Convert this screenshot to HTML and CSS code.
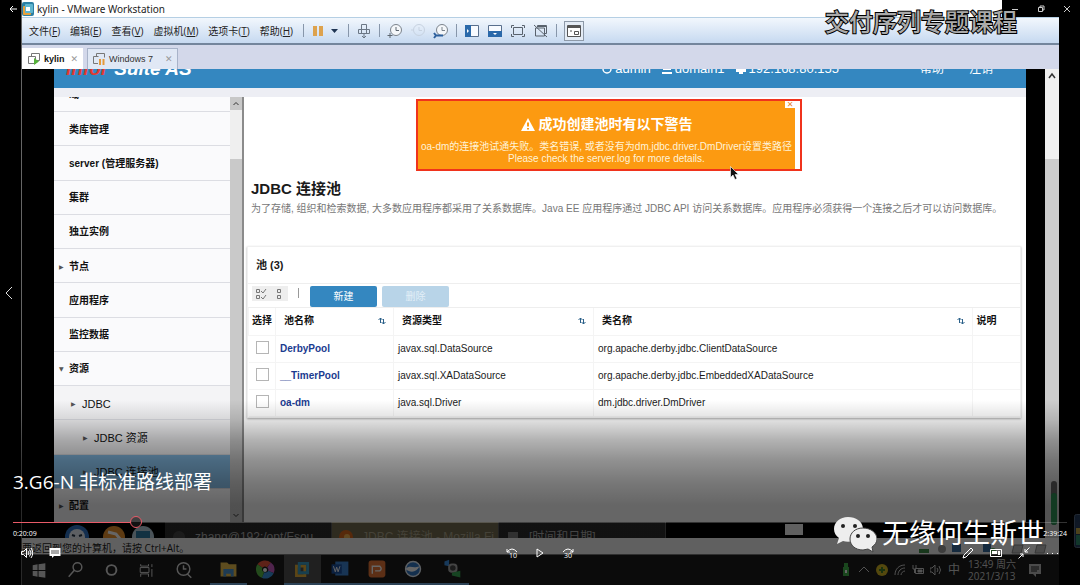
FILE: index.html
```html
<!DOCTYPE html>
<html lang="zh-CN">
<head>
<meta charset="utf-8">
<title>3.G6-N 非标准路线部署</title>
<link rel="stylesheet" href="styles.css">
</head>
<body>
<div class="player">
  <main class="desktop">
    <div class="titlebar">
      <svg class="app-icon" viewBox="0 0 12 14"><rect width="12" height="14" rx="2" fill="#2c7fa3"/><rect x="1" y="4" width="8" height="9" rx="1" fill="#e9a03a"/><rect x="3" y="2" width="8" height="9" rx="1" fill="#5fb5cf"/><rect x="4" y="5" width="4" height="4" fill="#fff"/></svg>
      <span>kylin - VMware Workstation</span>
    </div>
    <div class="menubar">
      <nav class="menus">
        <button>文件(<u>F</u>)</button><button>编辑(<u>E</u>)</button><button>查看(<u>V</u>)</button><button>虚拟机(<u>M</u>)</button><button>选项卡(<u>T</u>)</button><button>帮助(<u>H</u>)</button>
      </nav>
      <div class="tools">
        <i class="sep"></i>
        <button class="wide" aria-label="暂停"><svg width="30" height="16" viewBox="0 0 30 16"><path d="M2 3h4v10H2zM8 3h4v10H8z" fill="#dda24d"/><path d="M20 6h7l-3.500 4z" fill="#1f3554"/></svg></button>
        <i class="sep"></i>
        <button aria-label="发送"><svg width="16" height="16" viewBox="0 0 16 16" fill="none" stroke="#6b7785"><path d="M5.500 6V1.500h5V6M2.500 6.500h11v4h-11zM5.500 6.500v4M10.500 6.500v4M8 10v4M6 13l2 2 2-2"/></svg></button>
        <i class="sep"></i>
        <button aria-label="快照"><svg width="16" height="16" viewBox="0 0 16 16" fill="none" stroke="#7b838c"><circle cx="9" cy="7" r="5.500" fill="#f4f7fa"/><path d="M9 4v3.500h3M3 10v5M0.500 12.500h5" stroke="#5d6670"/></svg></button>
        <button aria-label="恢复快照" disabled><svg width="16" height="16" viewBox="0 0 16 16" fill="none" stroke="#c7d2e0"><circle cx="9" cy="7" r="5.500"/><path d="M9 4v3.500h3M1 7h2"/></svg></button>
        <button aria-label="管理快照"><svg width="16" height="16" viewBox="0 0 16 16" fill="none" stroke="#7b838c"><circle cx="9" cy="7" r="5.500" fill="#f4f7fa"/><path d="M9 4v3.500h3"/><path d="M1 10l2 2.500h7M1 15l2-2.500" stroke="#2c5f9c" stroke-width="2"/></svg></button>
        <i class="sep"></i>
        <button aria-label="显示库"><svg width="16" height="16" viewBox="0 0 16 16"><path d="M1.500 2.500h13v11h-13z" fill="#f8fbff" stroke="#596f8d"/><path d="M1 2h6v12H1z" fill="#2a69aa"/><path d="M3 6l2 2-2 2z" fill="#fff"/></svg></button>
        <button aria-label="缩略图栏"><svg width="16" height="16" viewBox="0 0 16 16"><path d="M1.500 2.500h13v11h-13z" fill="#f8fbff" stroke="#596f8d"/><path d="M1 8h14v6H1z" fill="#2a69aa"/><path d="M6 10h4l-2 2z" fill="#fff"/></svg></button>
        <button aria-label="全屏"><svg width="16" height="16" viewBox="0 0 16 16" fill="none" stroke="#59626d"><path d="M3.500 4.500h9v7h-9zM1.500 5V2.500H4M12 2.500h2.500V5M1.500 11v2.500H4M12 13.500h2.500V11"/></svg></button>
        <button aria-label="Unity"><svg width="16" height="16" viewBox="0 0 16 16" fill="none" stroke="#59626d"><path d="M4.500 4V2.500h9v8H12M2.500 5h9v8h-9zM1 2l13 12M5 3.500h8"/></svg></button>
        <i class="sep"></i>
        <button class="boxed" aria-label="控制台视图"><svg width="16" height="16" viewBox="0 0 16 16" fill="none" stroke="#555"><path d="M1.500 2.500h13v11h-13z" fill="#fff"/><path d="M1.500 4h13" stroke-width="2"/><path d="M8.500 8.500h4v3h-4zM4 8h2"/></svg></button>
      </div>
    </div>
    <div class="tabs">
      <button class="tab active"><svg width="12" height="12" viewBox="0 0 12 12" fill="none" stroke="#777"><path d="M3.500 3V.5h8v7H9M.5 3.500h7v7h-7z"/><path d="M6 5l5 3.500L6 12z" fill="#55b33a" stroke="none"/></svg><b>kylin</b><span class="x">✕</span></button>
      <button class="tab"><svg width="12" height="12" viewBox="0 0 12 12" fill="none" stroke="#777"><path d="M3.500 3V.5h8v4M.5 3.500h5M.5 3.500v7H5"/><path d="M6 6h2v6H6zM9.500 6h2v6h-2z" fill="#e59a3a" stroke="none"/></svg><span>Windows 7</span><span class="x far">✕</span></button>
    </div>
    <div class="guest">
      <div class="screen">
        <header class="banner">
          <div class="logo"><em>infor</em>Suite AS</div>
          <div class="who">
            <span><svg width="10" height="10" viewBox="0 0 10 10" fill="none" stroke="#fff" stroke-width="1.500"><circle cx="5" cy="5" r="4"/></svg>admin</span>
            <span><svg width="10" height="10" viewBox="0 0 10 10" fill="none" stroke="#fff" stroke-width="2"><path d="M1 1h8M1 5h8M0 9h10"/></svg>domain1</span>
            <span><svg width="10" height="10" viewBox="0 0 10 10" fill="#fff"><path d="M3 0h4v5h3v3H7v2H3V8H0V5h3z"/></svg>192.168.80.155</span>
          </div>
          <div class="links"><a href="#">帮助</a><a href="#">注销</a></div>
        </header>
        <div class="page">
          <aside class="side">
            <ul class="tree">
              <li class="cut">域</li>
              <li>类库管理</li>
              <li>server (管理服务器)</li>
              <li>集群</li>
              <li>独立实例</li>
              <li class="closed">节点</li>
              <li>应用程序</li>
              <li>监控数据</li>
              <li class="open">资源</li>
              <li class="closed l2">JDBC</li>
              <li class="closed l3">JDBC 资源</li>
              <li class="closed l3 current">JDBC 连接池</li>
              <li class="closed">配置</li>
            </ul>
            <div class="sidebar-scroll"><svg class="cap" viewBox="0 0 12 13"><path d="M3.500 8L6 5.500 8.500 8" fill="none" stroke="#333"/></svg><span class="thumb"></span><svg class="cap" viewBox="0 0 12 13"><path d="M3.500 5L6 7.500 8.500 5" fill="none" stroke="#333"/></svg></div>
          </aside>
          <section class="content">
            <div class="alert">
              <div class="alert-body">
                <h2><svg width="14" height="13" viewBox="0 0 14 13"><path d="M7 0l7 13H0z" fill="#fff"/><path d="M7 4.500v4M7 10v1.500" stroke="#fc9a11" stroke-width="2"/></svg>成功创建池时有以下警告</h2>
                <p>oa-dm的连接池试通失败。类名错误, 或者没有为dm.jdbc.driver.DmDriver设置类路径</p>
                <p>Please check the server.log for more details.</p>
                <button class="dismiss" aria-label="关闭">✕</button>
              </div>
            </div>
            <h1>JDBC 连接池</h1>
            <p class="desc">为了存储, 组织和检索数据, 大多数应用程序都采用了关系数据库。Java EE 应用程序通过 JDBC API 访问关系数据库。应用程序必须获得一个连接之后才可以访问数据库。</p>
            <div class="panel">
              <h3>池 (3)</h3>
              <div class="actions">
                <span class="picks">
                  <button aria-label="全选"><svg width="12" height="12" viewBox="0 0 12 12" fill="none" stroke="#777"><path d="M1.500 1.500h3v3h-3zM1.500 7.500h3v3h-3zM6 3l2 2 3-4M6 9l2 2 3-4"/></svg></button>
                  <button aria-label="取消全选"><svg width="12" height="12" viewBox="0 0 12 12" fill="none" stroke="#777"><path d="M4.500 1.500h3v3h-3zM4.500 7.500h3v3h-3z"/></svg></button>
                </span>
                <i class="bar"></i>
                <button class="primary">新建</button>
                <button class="primary" disabled>删除</button>
              </div>
              <table>
                <colgroup><col class="c1"><col class="c2"><col class="c3"><col><col class="c5"></colgroup>
                <thead><tr><th class="pick">选择</th>
                  <th><div>池名称<svg width="8" height="8" viewBox="0 0 8 8" fill="none" stroke="#2b6089"><path d="M2.500 6V1M.5 3l2-2 2 2M5.500 2v5M3.500 5l2 2 2-2"/></svg></div></th>
                  <th><div>资源类型<svg width="8" height="8" viewBox="0 0 8 8" fill="none" stroke="#2b6089"><path d="M2.500 6V1M.5 3l2-2 2 2M5.500 2v5M3.500 5l2 2 2-2"/></svg></div></th>
                  <th><div>类名称<svg width="8" height="8" viewBox="0 0 8 8" fill="none" stroke="#2b6089"><path d="M2.500 6V1M.5 3l2-2 2 2M5.500 2v5M3.500 5l2 2 2-2"/></svg></div></th>
                  <th class="last">说明</th></tr></thead>
                <tbody>
                  <tr><td class="pick"><input type="checkbox" aria-label="DerbyPool"></td><td><a href="#">DerbyPool</a></td><td>javax.sql.DataSource</td><td>org.apache.derby.jdbc.ClientDataSource</td><td></td></tr>
                  <tr><td class="pick"><input type="checkbox" aria-label="__TimerPool"></td><td><a href="#">__TimerPool</a></td><td>javax.sql.XADataSource</td><td>org.apache.derby.jdbc.EmbeddedXADataSource</td><td></td></tr>
                  <tr><td class="pick"><input type="checkbox" aria-label="oa-dm"></td><td><a href="#">oa-dm</a></td><td>java.sql.Driver</td><td>dm.jdbc.driver.DmDriver</td><td></td></tr>
                </tbody>
              </table>
            </div>
          </section>
        </div>
        <div class="guest-bar">
          <svg width="92" height="16" viewBox="0 0 92 16"><circle cx="15" cy="15" r="12" fill="#2f73c4"/><circle cx="15" cy="15" r="8" fill="#e8eef6"/><path d="M10 13l3 1M20 13l-3 1" stroke="#234" stroke-width="2"/><circle cx="52" cy="15" r="11" fill="#e8912d"/><path d="M46 10l8 2 4 5" stroke="#fff" stroke-width="3" fill="none"/><circle cx="81" cy="15" r="11" fill="#b9cfdd"/><path d="M74 9h14v8H74z" fill="#2d7aa5"/></svg>
          <div class="task"><svg width="14" height="14" viewBox="0 0 14 14"><circle cx="7" cy="7" r="6" fill="#444"/></svg>zhang@192:/opt/Fsou…</div>
          <div class="task on"><svg width="14" height="14" viewBox="0 0 14 14"><circle cx="7" cy="7" r="7" fill="#d8661c"/><circle cx="8" cy="7" r="3" fill="#f3b251"/></svg>JDBC 连接池 - Mozilla Fi…</div>
          <div class="task"><svg width="14" height="14" viewBox="0 0 14 14"><rect x="2" y="2" width="10" height="10" fill="#777"/></svg>[时间和日期]</div>
          <span class="pager"></span>
        </div>
      </div>
      <div class="outer-scroll"><svg width="14" height="14" viewBox="0 0 14 14"><path d="M4 9l3-4 3 4" fill="none" stroke="#333" stroke-width="1.500"/></svg><span></span></div>
    </div>
    <div class="status"><span>要返回到您的计算机，请按 Ctrl+Alt。</span>
      <svg width="136" height="14" viewBox="0 0 136 14"><path d="M2 8h10v4H2z" fill="#3b8a46"/><circle cx="25" cy="8" r="4" fill="#999"/><path d="M35 3h9v8h-9z" fill="#376b9d"/><path d="M66 3h8v8h-8z" fill="#376b9d"/><circle cx="76" cy="10" r="3" fill="#4da84d"/><path d="M97 4h9l-2 8h-9zM120 4h9l-2 8h-9z" fill="#bbb" stroke="#888"/></svg>
    </div>
    <div class="taskbar">
      <div class="pins system">
        <svg viewBox="0 0 37 30"><path d="M11 10l5-1v6h-5zM17 9l7-1v7h-7zM11 16h5v6l-5-1zM17 16h7v7l-7-1z" fill="#d8d8d8"/></svg>
        <svg viewBox="0 0 37 30" fill="none" stroke="#d8d8d8" stroke-width="1.500"><circle cx="20" cy="12" r="4.500"/><path d="M17 15l-6 7"/></svg>
        <svg viewBox="0 0 37 30" fill="none" stroke="#d8d8d8" stroke-width="2"><circle cx="18" cy="15" r="5"/></svg>
        <svg viewBox="0 0 37 30" fill="none" stroke="#d8d8d8"><path d="M11 9v2h8V9M11 22v-3h8v3M10.500 12.500h9v5h-9zM22.500 9v3M22.500 14v8"/></svg>
        <svg viewBox="0 0 37 30" fill="none" stroke="#d8d8d8" stroke-width="1.500"><circle cx="18" cy="14" r="6.500"/><path d="M18 10v4h3M22 19l4 4"/></svg>
      </div>
      <div class="pins">
        <svg class="run" viewBox="0 0 37 30"><path d="M10 8h7l2 2h8v13H10z" fill="#e9bd4c"/><path d="M13 15h11v8h-3v-3h-5v3h-3z" fill="#4c94cf"/></svg>
        <svg viewBox="0 0 37 30" fill="none" stroke-width="6"><path d="M13 11a6 6 0 0 1 9-1" stroke="#e9543c"/><path d="M22 10a6 6 0 0 1 2 7" stroke="#c75ac0"/><path d="M24 17a6 6 0 0 1-8 3" stroke="#3992dc"/><path d="M16 20a6 6 0 0 1-3-9" stroke="#58b946"/><circle cx="18" cy="15" r="2" fill="#fff" stroke="none"/></svg>
        <svg class="run sel" viewBox="0 0 37 30" fill="none" stroke-width="3"><path d="M12 12h9v10h-9z" stroke="#e6af38"/><path d="M15 9h9v10h-9z" stroke="#3c9dc4"/></svg>
        <svg class="run" viewBox="0 0 37 30"><path d="M14 7h14v15H14z" fill="#3b83d2"/><path d="M10 10h11v10H10z" fill="#1c51a0"/><path d="M12 12l2 6 1.500-5 1.500 5 2-6" fill="none" stroke="#fff"/></svg>
        <svg class="run" viewBox="0 0 37 30"><rect x="10" y="6" width="18" height="18" rx="3" fill="#e67636"/><path d="M14 20v-8h8q3 3 0 5h-5" fill="none" stroke="#fff" stroke-width="1.500"/></svg>
        <svg class="run" viewBox="0 0 37 30"><circle cx="18" cy="15" r="8" fill="#3278c4" stroke="#e6edf5" stroke-width="1.500"/><path d="M10 15c5-5 7 0 15-3-3 6-9 8-15 3z" fill="#fff"/></svg>
        <svg class="run" viewBox="0 0 37 30"><path d="M12 7l5-2v7l-5-1z" fill="#3a8ee0"/><rect x="16" y="9" width="10" height="10" rx="4" fill="#aaa"/><circle cx="21" cy="14" r="3" fill="#444"/><path d="M20 19l9-2v7l-9-2z" fill="#38a954"/></svg>
      </div>
      <div class="tray">
        <svg width="12" height="16" viewBox="0 0 12 16"><path d="M4 1h4v4H4zM3 5h6v9H3z" fill="#3fae49"/><path d="M5 8h2v3H5z" fill="#fff"/></svg>
        <svg width="12" height="16" viewBox="0 0 12 16"><path d="M1 10l5-5 5 5" fill="none" stroke="#ccc"/></svg>
        <svg width="12" height="16" viewBox="0 0 12 16"><circle cx="6" cy="8" r="6" fill="#d1b522"/><path d="M6 5v6M3 8h6" stroke="#3f7d27" stroke-width="2"/></svg>
        <svg width="12" height="16" viewBox="0 0 12 16" fill="none" stroke="#ccc"><path d="M1 13C1 7 5 3 11 3M4 13c0-4 3-7 7-7M7 13c0-2 2-4 4-4"/></svg>
        <svg width="12" height="16" viewBox="0 0 12 16" fill="none" stroke="#ccc"><path d="M3.500 6.500h8v5h-8zM1 3v4h3V3M2.500 7v4"/><path d="M6 8h4v2H6z" fill="#ccc"/></svg>
        <svg width="12" height="16" viewBox="0 0 12 16" fill="none" stroke="#ccc"><path d="M0 6h2l3-3v10l-3-3H0zM7 6q2 2 0 4M9 4q3 4 0 8"/></svg>
        <span class="ime">中</span>
        <div class="clock"><span>13:49 周六</span><span>2021/3/13</span></div>
        <svg width="14" height="16" viewBox="0 0 14 16"><path d="M1 2h12v10H8v3l-3-3H1z" fill="#bbb"/><path d="M3 5h8M3 7h8M3 9h6" stroke="#222"/></svg>
      </div>
    </div>
  </main>

  <svg class="pointer" width="9" height="14" viewBox="0 0 9 14"><path d="M.5.5v11l2.500-2.500 2 4.500 2-1-2-4H8.500z" fill="#111" stroke="#fff" stroke-width=".6"/></svg>
  <svg class="edge" width="6" height="34" viewBox="0 0 6 34"><rect x=".5" y=".5" width="8" height="33" rx="2" fill="#223a5b" stroke="#55667f"/><path d="M2 8h4v5H2z" fill="#273c5c"/><path d="M2 14h4v6H2z" fill="#c0a646"/><path d="M2 21h4v10H2z" fill="#2d8a6b"/></svg>
  <div class="shade"></div>
  <svg class="meter" width="6" height="44" viewBox="0 0 6 44"><rect width="6" height="44" rx="3" fill="#2a2a2a"/><rect y="12" width="6" height="32" rx="3" fill="#123a22"/></svg>
  <button class="back" aria-label="返回"><svg width="8" height="8" viewBox="0 0 8 8" fill="none" stroke="#fff"><path d="M8 4H1M4 1L1 4l3 3"/></svg></button>
  <button class="prev" aria-label="上一个"><svg width="9" height="14" viewBox="0 0 9 14" fill="none" stroke="#ddd"><path d="M8 1L2 7l6 6"/></svg></button>
  <div class="captions">
    <button aria-label="最小化"><svg width="8" height="8" viewBox="0 0 8 8" stroke="#ccc"><path d="M1 4.500h6"/></svg></button>
    <button aria-label="还原"><svg width="8" height="8" viewBox="0 0 8 8" fill="none" stroke="#ccc"><path d="M1.500 2.500h4v4h-4zM3 2V1h4v4H6"/></svg></button>
    <button aria-label="关闭"><svg width="8" height="8" viewBox="0 0 8 8" stroke="#ccc"><path d="M1 1l6 6M7 1L1 7"/></svg></button>
  </div>
  <div class="course">交付序列专题课程</div>

  <div class="controls">
    <div class="video-title">3.G6-N 非标准路线部署</div>
    <input class="seek" type="range" min="0" max="9564" value="1074" aria-label="播放进度">
    <div class="times"><span>0:20:09</span><span>2:39:24</span></div>
    <div class="buttons">
      <div class="group left">
        <button aria-label="音量"><svg width="12" height="12" viewBox="0 0 12 12" fill="none" stroke="#fff"><path d="M.5 4.500h2l3-3v9l-3-3h-2zM7 4q2 2 0 4M8.500 2.500q3 3.500 0 7M10 1q3.500 5 0 10"/></svg></button>
        <button aria-label="字幕"><svg width="12" height="12" viewBox="0 0 12 12"><path d="M.5 1h11v8H5l-2 2V9H.5z" fill="#fff"/><path d="M2 4h8M2 6h8" stroke="#555"/></svg></button>
      </div>
      <div class="group">
        <button aria-label="后退 10 秒"><svg width="12" height="12" viewBox="0 0 12 12"><path d="M1 5q5-6 10 0M1 2v3h3" fill="none" stroke="#fff"/><text x="3" y="11" font-size="7" fill="#fff">10</text></svg></button>
        <button aria-label="播放"><svg width="12" height="12" viewBox="0 0 12 12" fill="none" stroke="#fff"><path d="M3 2l6 4-6 4z"/></svg></button>
        <button aria-label="前进 30 秒"><svg width="12" height="12" viewBox="0 0 12 12"><path d="M1 5q5-6 10 0M11 2v3H8" fill="none" stroke="#fff"/><text x="2" y="11" font-size="7" fill="#fff">30</text></svg></button>
      </div>
      <div class="group right">
        <button aria-label="编辑"><svg width="12" height="12" viewBox="0 0 12 12" fill="none" stroke="#fff"><path d="M1 11l1-3 7-7 2 2-7 7z"/></svg></button>
        <button aria-label="画中画"><svg width="12" height="12" viewBox="0 0 12 12"><path d="M.5 2.500h11v7H.5z" fill="none" stroke="#fff"/><path d="M2 4h5v3H2zM8 4h2v4H8z" fill="#fff"/></svg></button>
        <button aria-label="退出全屏"><svg width="12" height="12" viewBox="0 0 12 12" fill="none" stroke="#fff"><path d="M11.500.5L7 5M7 2v3h3M.5 11.500L5 7M2 7h3v3"/></svg></button>
        <button aria-label="更多"><svg width="12" height="12" viewBox="0 0 12 12" fill="#fff"><path d="M1 6h1v1H1zM6 6h1v1H6zM11 6h1v1h-1z"/></svg></button>
      </div>
    </div>
  </div>
  <div class="watermark">
    <svg width="44" height="37" viewBox="0 0 44 37"><path d="M15 1C7 1 1 6 1 13c0 4 2 7 5 9l-2 6 6-3c3 1 7 1 10 0C29 24 31 18 30 12 29 5 23 1 15 1z" fill="#eee"/><path d="M30 12c-8 0-13 5-13 11s5 11 13 11l5-1 5 3-1-5c3-2 5-5 5-8 0-6-6-11-14-11z" fill="#eee" stroke="#444"/><g fill="#222"><circle cx="10" cy="10" r="2"/><circle cx="22" cy="10" r="2"/><circle cx="25" cy="20" r="2"/><circle cx="35" cy="20" r="2"/></g></svg>
    <span>无缘何生斯世</span>
  </div>
</div>
</body>
</html>
```
FILE: styles.css
```css
* { box-sizing: border-box; }
body {
  margin: 0;
  background: #000;
  font: 10px/12px "Liberation Sans", "Noto Sans CJK SC", sans-serif;
  color: #1a1a1a;
}
button { border: 0; padding: 0; background: none; font: inherit; color: inherit; display: flex; align-items: center; justify-content: center; }
h1, h2, h3, p, ul { margin: 0; padding: 0; }
svg { display: block; flex: none; }

.player { position: relative; overflow: hidden; }
.desktop { display: flex; flex-direction: column; min-height: 100vh; margin: 0 21px; border-left: 1px solid #666; }

/* Workstation window */
.titlebar { display: flex; align-items: center; gap: 3px; height: 17px; background: #fff; font-family: "Noto Sans", "Noto Sans CJK SC", sans-serif; color: #222; }
.app-icon { width: 12px; height: 14px; }
.menubar { display: flex; align-items: center; height: 28px; border-top: 1px solid #b5cfe4; border-bottom: 2px solid #73859c; background: linear-gradient(#f2f7fd, #c6d9f0); }
.menus { display: flex; gap: 10px; padding-left: 7px; color: #222; font-family: "Open Sans", "Noto Sans CJK SC", sans-serif; }
.tools { display: flex; align-items: center; gap: 7px; margin-left: 10px; }
.sep { width: 1px; height: 13px; background: #8796aa; }
.boxed { width: 20px; height: 20px; border: 1px solid #8d99a8; background: #e4ecf6; }
.tabs { display: flex; align-items: flex-end; gap: 4px; height: 24px; background: #d3d8ea; }
.tab { height: 21px; gap: 4px; padding: 0 4px 0 5px; border: 1px solid #a8b3c9; border-bottom: 0; background: #e0e8f5; color: #333; font-size: 9px; }
.tab.active { background: #fff; color: #111; border-color: #fff; }
.x { color: #999; font-family: "DejaVu Sans", sans-serif; margin-left: 2px; }
.x.far { margin-left: 8px; }

/* Guest screen */
.guest { flex: 1; display: flex; min-height: 0; }
.screen { flex: 1; display: flex; flex-direction: column; min-width: 0; padding: 0 19px 0 32px; background: #000; }
.banner { display: flex; align-items: flex-end; height: 19px; padding: 0 33px 11px 12px; overflow: hidden; background: #3487c0; color: #fff; font-size: 13px; line-height: 16px; }
.logo { flex: 1; font-size: 19px; line-height: 16px; font-weight: bold; font-style: italic; }
.logo em { margin-right: 6px; color: #e23a30; }
.who { display: flex; gap: 11px; padding-right: 81px; }
.who span { display: flex; align-items: center; gap: 3px; }
.links { display: flex; gap: 25px; font-size: 12px; }
.links a { color: #fff; text-decoration: none; }
.page { flex: 1; display: flex; border-top: 9px solid #edeef4; background: #fff; }

.side { display: flex; width: 190px; border-right: 2px solid #8b8b8b; }
.tree { flex: 1; display: flex; flex-direction: column; list-style: none; background: #fafafc; }
.tree li { flex: 1; display: flex; align-items: center; border-top: 1px solid #dcdde3; padding: 2px 0 0 15px; font-weight: bold; color: #111; }
.tree .cut { flex: none; height: 14px; align-items: flex-end; padding: 0 0 10px 15px; border: 0; overflow: hidden; }
.tree .closed, .tree .open { padding-left: 5px; }
.closed::before, .open::before { content: "▶"; width: 10px; font: 6px/12px "DejaVu Sans", sans-serif; color: #555; }
.open::before { content: "▼"; }
.tree .l2 { padding-left: 17px; background: #f4f4f6; }
.tree .l3 { padding-left: 29px; background: #f0f0f2; }
.tree .l2, .tree .l3 { font-weight: normal; font-size: 11px; }
.tree .current { background: #82b9e2; }
.l2::before, .l3::before { flex: none; width: 11px; }
.sidebar-scroll { display: flex; flex-direction: column; width: 12px; background: #efefef; }
.cap { width: 12px; height: 13px; background: #c8c8c8; }
.thumb { flex: 1; margin-top: 49px; background: #c9c9c9; }

.content { flex: 1; display: flex; flex-direction: column; min-width: 0; padding: 1px 5px 0 3px; }
.alert { width: 386px; margin: 1px 0 0 169px; padding-right: 5px; border: 2px solid #f0331c; background: #fff; }
.alert-body { position: relative; padding: 14px 0 4px; background: #fc9a11; color: #fff3d8; text-align: center; white-space: nowrap; }
.alert h2 { display: flex; align-items: center; justify-content: center; gap: 4px; margin-bottom: 7px; font-size: 14px; line-height: 19px; color: #fff; }
.dismiss { position: absolute; top: 0; right: 0; width: 10px; height: 7px; background: #fff; color: #e8862a; font: 8px/8px "DejaVu Sans", sans-serif; }
h1 { margin: 8px 4px 0; font-size: 15px; line-height: 20px; }
.desc { margin: 4px 4px 0; color: #777; line-height: 12px; }
.panel { margin-top: 31px; border: 1px solid #f0f0f0; box-shadow: 0 1px 2px #aaa; }
h3 { padding: 0 8px; font-size: 11px; line-height: 36px; }
.actions { display: flex; gap: 6px; height: 25px; padding: 2px 4px; border-top: 1px solid #eee; border-bottom: 1px solid #eee; }
.picks { display: flex; gap: 6px; height: 15px; width: 36px; padding: 0 3px; background: #eee; }
.bar { width: 1px; height: 10px; margin: 2px 5px 0 4px; background: #999; }
.primary { width: 67px; height: 21px; border-radius: 2px; background: #3487c0; color: #fff; }
.primary:disabled { margin-left: -1px; background: #b8d4e8; color: #e2eef7; }

table { width: 100%; table-layout: fixed; border-collapse: collapse; }
.c1 { width: 27px; }
.c2 { width: 118px; }
.c3 { width: 200px; }
.c5 { width: 48px; }
th, td { height: 27px; padding: 0 4px; text-align: left; border-left: 1px solid #f4f4f4; border-bottom: 1px solid #f4f4f4; white-space: nowrap; }
th { padding: 0 7px 0 8px; font-weight: bold; color: #111; }
th div { display: flex; align-items: center; justify-content: space-between; }
th.pick { padding: 0 0 0 3px; }
th.last { padding: 0 4px; }
td a { color: #1b3b8f; font-weight: bold; text-decoration: none; }
td.pick { padding: 0 7px 2px; border-left: 0; }
td input { appearance: none; display: block; width: 13px; height: 13px; margin: 0; border: 1px solid #b5b5b5; background: #fff; }

.guest-bar { display: flex; height: 16px; padding-left: 8px; background: #000; overflow: hidden; }
.guest-bar > svg { margin-right: 11px; }
.task { display: flex; align-items: center; gap: 9px; width: 167px; height: 30px; padding-left: 7px; border-right: 1px solid #555; background: #2b2b2b; color: #aaa; font-size: 12px; white-space: nowrap; overflow: hidden; }
.task.on { background: #736b50; color: #aaa38a; }
.pager { width: 18px; height: 11px; margin: 2px 0 0 119px; background: #f0f0f0; }
.outer-scroll { display: flex; flex-direction: column; width: 14px; background: #f0f0f0; }
.outer-scroll span { flex: 1; margin-top: 76px; background: #cdcdcd; }
.status { display: flex; justify-content: space-between; align-items: center; height: 17px; padding: 3px 6px 0 0; border-bottom: 1px solid #777; background: #f0f0f0; color: #222; font-family: "Open Sans", "Noto Sans CJK SC", sans-serif; }

.taskbar { display: flex; gap: 8px; height: 30px; background: #1b1b1b; color: #ccc; }
.pins { display: flex; }
.pins svg { width: 37px; height: 30px; }
.system svg { width: 36px; }
.pins .run { border-bottom: 2px solid #6fa6d8; }
.pins .sel { background: #505050; }
.tray { flex: 1; display: flex; align-items: center; justify-content: flex-end; gap: 6px; padding-right: 17px; }
.ime { font-size: 12px; }
.clock { display: flex; flex-direction: column; width: 56px; padding-left: 2px; font-family: "Open Sans", "Noto Sans CJK SC", sans-serif; }

/* Player overlay */
.shade { position: absolute; left: 0; right: 0; bottom: 0; height: 185px; pointer-events: none; background: linear-gradient(transparent 0, rgb(0 0 0 / 12%) 20px, rgb(0 0 0 / 30%) 40px, rgb(0 0 0 / 43%) 60px, rgb(0 0 0 / 53%) 82px, rgb(0 0 0 / 60%) 105px); }
.pointer { position: absolute; left: 730px; top: 166px; }
.edge { position: absolute; right: 0; bottom: 37px; }
.meter { position: absolute; right: 23px; bottom: 60px; }
.back { position: absolute; left: 9px; top: 5px; }
.prev { position: absolute; left: 4px; top: 286px; }
.captions { position: absolute; top: 0; right: 0; display: flex; width: 78px; height: 17px; background: #000; }
.captions button { flex: 1; }
.course { position: absolute; top: 5px; right: 63px; color: #aaa; font-size: 24px; line-height: 36px; font-weight: 500; -webkit-text-stroke: 2px #000; paint-order: stroke fill; }
.controls { position: absolute; left: 13px; right: 13px; bottom: 26px; color: #fff; font-family: "Open Sans", "Noto Sans CJK SC", sans-serif; }
.video-title { font-size: 19px; line-height: 28px; }
.seek { appearance: none; display: block; width: 100%; height: 12px; margin: 20px 0 0; background: linear-gradient(#e85a68, #e85a68) 0 6px / 118px 1px no-repeat, linear-gradient(#fff3, #fff3) 128px 6px / 100% 1px no-repeat; }
.seek::-webkit-slider-thumb { appearance: none; width: 12px; height: 12px; border: 1px solid #e85a68; border-radius: 50%; background: #2228; }
.times { display: flex; justify-content: space-between; font-size: 7px; line-height: 12px; }
.buttons { display: grid; grid-template-columns: 1fr auto 1fr; margin-top: 7px; }
.group { display: flex; gap: 16px; }
.left { padding-left: 8px; }
.right { justify-content: flex-end; padding-right: 9px; }
.watermark { position: absolute; right: 36px; bottom: 32px; display: flex; align-items: center; gap: 5px; color: #fff; font-size: 27px; line-height: 37px; }
```
